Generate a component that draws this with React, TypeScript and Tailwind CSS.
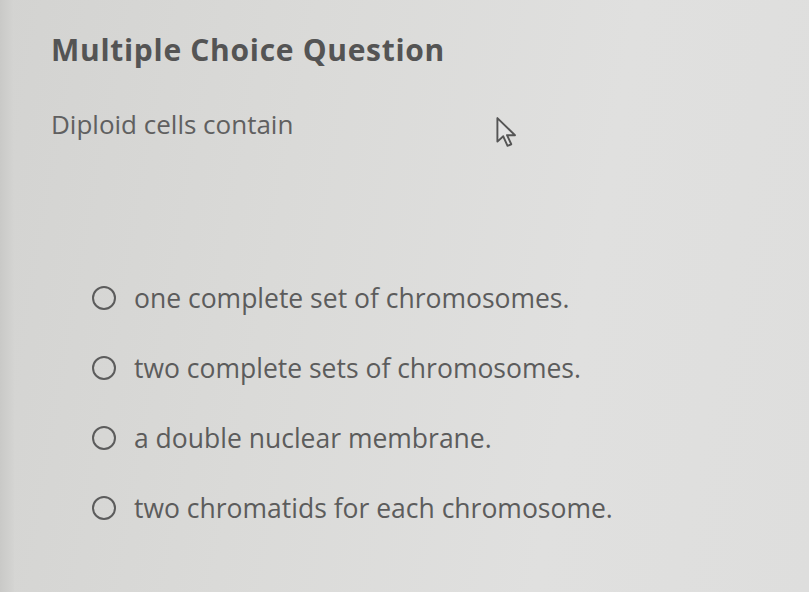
const options = [
  "one complete set of chromosomes.",
  "two complete sets of chromosomes.",
  "a double nuclear membrane.",
  "two chromatids for each chromosome.",
];

function Cursor() {
  return (
    <svg width="24" height="32" viewBox="0 0 22 30" className="absolute left-[495px] top-[116px]">
      <path
        d="M2 2 L2 24 L7.5 19 L11.5 28 L15 26.5 L11 18 L18.5 18 Z"
        fill="#e4e4e4"
        stroke="#555"
        strokeWidth="1.8"
        strokeLinejoin="round"
      />
    </svg>
  );
}

export default function App() {
  return (
    <div className="relative flex h-[592px] w-[809px] overflow-hidden bg-[linear-gradient(100deg,#d3d3d1_0%,#dadad8_35%,#e0e0df_70%,#dededd_100%)] font-['Open_Sans',sans-serif]">
      <div className="w-[14px] shrink-0 bg-[linear-gradient(90deg,#c9c9c7,#d4d4d2)]" />
      <div className="flex-1 pl-[37px] pt-[30px]">
        <h1 className="text-[30px] font-bold leading-[40px] tracking-[0.7px] text-[#545454]">
          Multiple Choice Question
        </h1>
        <p className="mt-[37px] text-[26px] leading-[34px] text-[#606060]">Diploid cells contain</p>
        <div className="mt-[140px] flex flex-col gap-[36px] pl-[41px]">
          {options.map((o) => (
            <div key={o} className="flex h-[34px] items-center gap-[18px]">
              <span className="h-[24px] w-[24px] shrink-0 rounded-full border-[2.5px] border-[#5c5c5c]" />
              <span className="text-[26.5px] leading-[34px] text-[#5c5c5c]">{o}</span>
            </div>
          ))}
        </div>
      </div>
      <Cursor />
    </div>
  );
}
